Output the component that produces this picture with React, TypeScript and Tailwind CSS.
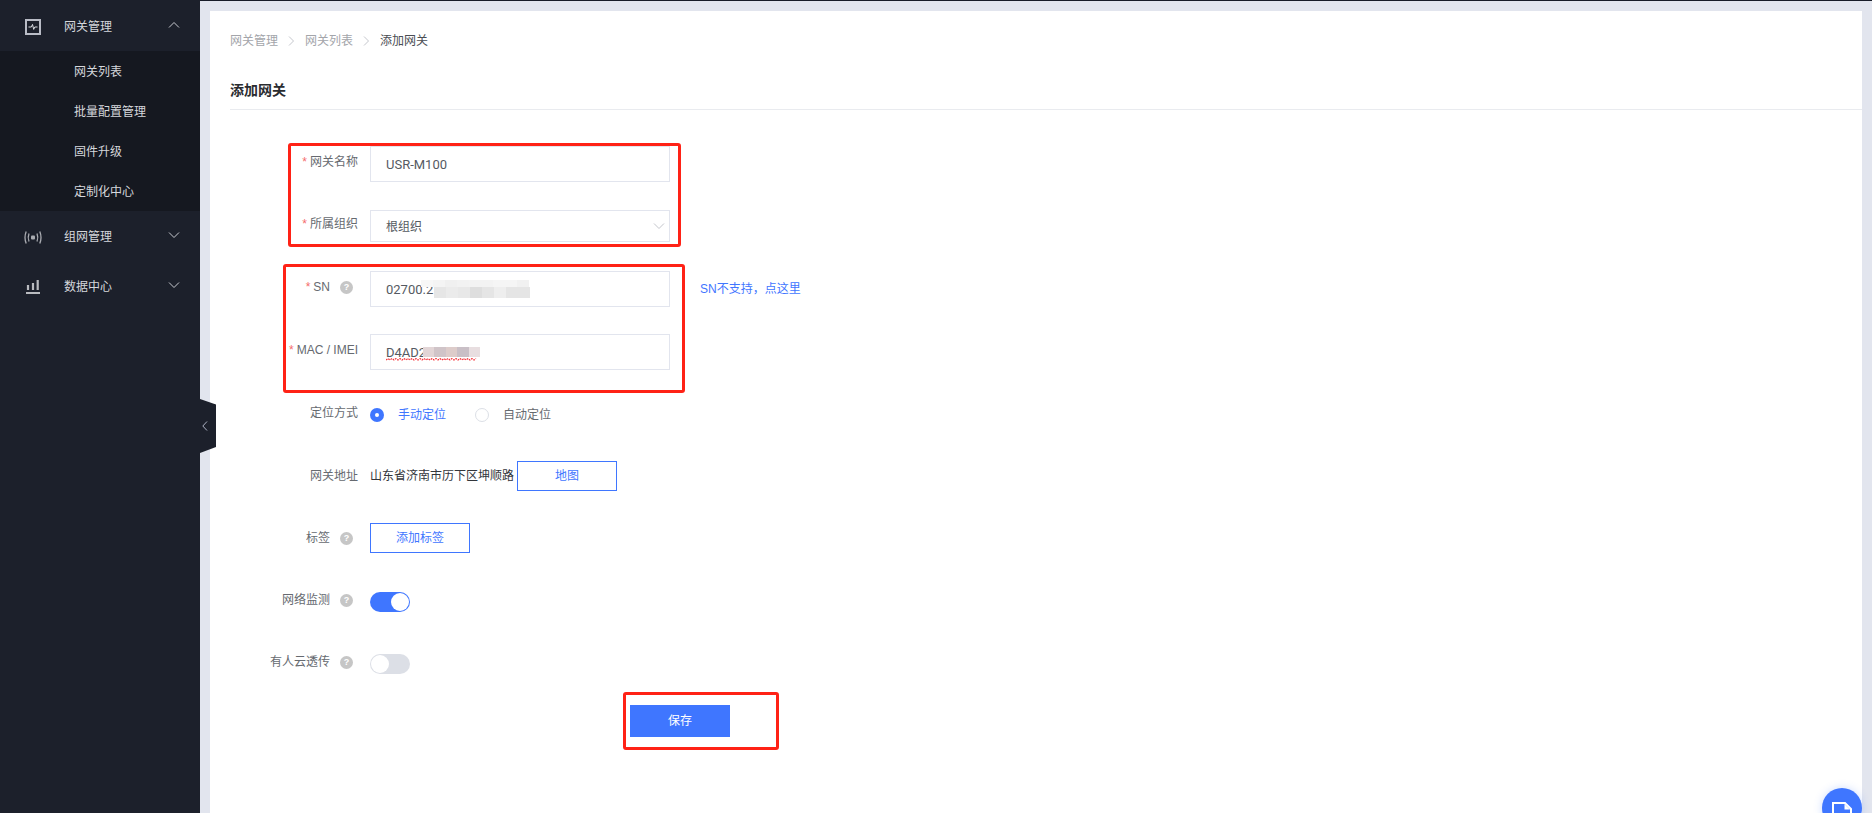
import React from "react";

const Chevron = ({ up = false, className = "" }: { up?: boolean; className?: string }) => (
  <svg width="12" height="8" viewBox="0 0 12 8" fill="none" className={className}>
    <path d={up ? "M1 6.5 L6 1.5 L11 6.5" : "M1 1.5 L6 6.5 L11 1.5"} stroke="currentColor" strokeWidth="1" />
  </svg>
);

const Crumb = () => (
  <svg width="7" height="10" viewBox="0 0 7 10" fill="none" className="text-[#c4c6cc]">
    <path d="M1 0.5 L5.5 5 L1 9.5" stroke="currentColor" strokeWidth="1" />
  </svg>
);

const Help = () => (
  <span className="flex h-[13px] w-[13px] shrink-0 items-center justify-center rounded-full bg-[#c6c6c6] text-[9px] leading-none font-bold text-white">?</span>
);

const SideRow = ({ icon, label, up = false }: { icon: React.ReactNode; label: string; up?: boolean }) => (
  <div className="flex h-[50px] items-center pt-[2px] text-[12px] text-[#d5d7dc]">
    <span className="flex w-[64px] justify-center pl-[2px]">{icon}</span>
    <span className="flex-1">{label}</span>
    <Chevron up={up} className="mr-[20px] mb-[5px] text-[#c8cad0]" />
  </div>
);

const Row = ({ label, required = false, help = false, flat = false, top, children }: { label: string; required?: boolean; help?: boolean; flat?: boolean; top: string; children: React.ReactNode }) => (
  <div className={`flex items-center ${top}`}>
    <div className={`flex w-[128px] shrink-0 items-center justify-end text-[12px] text-[#666a70] ${flat ? "" : "-translate-y-[2px]"}`}>
      {required && <span className="mr-[3px] text-[#f56c6c]">*</span>}
      <span className="whitespace-nowrap">{label}</span>
      {help && <span className="ml-[10px] mr-[5px]"><Help /></span>}
    </div>
    <div className="ml-[12px] flex items-center">{children}</div>
  </div>
);

const Annot = ({ className }: { className: string }) => (
  <div className={`pointer-events-none absolute rounded-[3px] border-[3px] border-[#ff2216] ${className}`} />
);

const Toggle = ({ on }: { on: boolean }) => (
  <span className={`flex h-[20px] w-[40px] items-center rounded-full ${on ? "justify-end bg-[#3f76ff] pr-[1px]" : "justify-start bg-[#dcdfe6] pl-[1px]"}`}>
    <span className="h-[18px] w-[18px] rounded-full bg-white" />
  </span>
);

const snTop = ["bg-[#f7f7f7]", "bg-[#f4f4f4]", "bg-[#f0f0f0]", "bg-[#f2f2f2]", "bg-[#f3f3f3]", "bg-[#f3f3f3]", "bg-[#f5f5f5]", "bg-[#f5f5f5]", "bg-[#f1f1f1]"];
const snBottom = ["bg-[#e6e6e6]", "bg-[#ebebeb]", "bg-[#e8e8e8]", "bg-[#dedede]", "bg-[#e5e5e5]", "bg-[#eeeeee]", "bg-[#e5e5e5]", "bg-[#e5e5e5]"];
const macCells = ["bg-[#e2d5d6]", "bg-[#d0c4c8]", "bg-[#ddccca]", "bg-[#c9bfc6]", "bg-[#e8dee0]"];

export default function App() {
  return (
    <div className="relative flex h-[813px] w-[1872px] overflow-hidden bg-[#e2e5ee] text-[12px] font-['Liberation_Sans','Noto_Sans_CJK_SC',sans-serif]">
      <aside className="flex w-[200px] shrink-0 flex-col bg-[#1c202b]">
        <div className="pt-[1px]">
          <SideRow
            up
            label="网关管理"
            icon={
              <svg width="16" height="16" viewBox="0 0 16 16" fill="none" className="text-[#b9bcc6]">
                <rect x="1" y="1" width="14" height="14" stroke="currentColor" strokeWidth="2" />
                <path d="M3.5 8 H6.4 L7.5 5.4 L8.7 10.4 L9.8 8 H12.5" stroke="#d9dbe0" strokeWidth="1" />
              </svg>
            }
          />
        </div>
        <div className="flex flex-col bg-[#151820] pl-[74px] text-[12px] text-[#d5d7dc]">
          {["网关列表", "批量配置管理", "固件升级", "定制化中心"].map((t) => (
            <div key={t} className="flex h-[40px] items-center pt-[2px]">{t}</div>
          ))}
        </div>
        <SideRow
          label="组网管理"
          icon={
            <svg width="18" height="13" viewBox="0 0 18 13" fill="none" className="text-[#a9abb1]">
              <rect x="7" y="4.5" width="4" height="4" rx="1" fill="currentColor" />
              <path d="M5 2.5 Q3.4 6.5 5 10.5 M13 2.5 Q14.6 6.5 13 10.5" stroke="currentColor" strokeWidth="1.3" />
              <path d="M2.2 0.5 Q-0.2 6.5 2.2 12.5 M15.8 0.5 Q18.2 6.5 15.8 12.5" stroke="currentColor" strokeWidth="1.3" />
            </svg>
          }
        />
        <SideRow
          label="数据中心"
          icon={
            <svg width="14" height="14" viewBox="0 0 14 14" fill="none" className="text-[#b9bbc0]">
              <path d="M0 13 H14" stroke="currentColor" strokeWidth="2" />
              <path d="M2 10 V5 M7 10 V3 M11.7 10 V0" stroke="currentColor" strokeWidth="2.2" />
            </svg>
          }
        />
      </aside>

      <div className="flex min-w-0 flex-1 flex-col">
        <div className="h-[1px] shrink-0 bg-[#181c28]" />
        <main className="mt-[10px] mr-[10px] ml-[10px] flex flex-1 flex-col bg-white pl-[20px]">
          <nav className="flex h-[60px] shrink-0 items-center gap-[10px] text-[12px] text-[#a3a5aa]">
            <span>网关管理</span>
            <Crumb />
            <span>网关列表</span>
            <Crumb />
            <span className="text-[#4a4d53]">添加网关</span>
          </nav>
          <h1 className="flex h-[39px] shrink-0 items-center border-b border-[#e9ebef] text-[14px] font-bold text-[#2a2c30]">添加网关</h1>

          <Row required label="网关名称" top="mt-[36px]">
            <div className="flex h-[36px] w-[300px] items-center border border-[#e2e5ee] pt-[2px] pl-[15px] font-['Roboto','Noto_Sans_CJK_SC',sans-serif] text-[13px] text-[#555a62]">USR-M100</div>
          </Row>
          <Row required label="所属组织" top="mt-[28px]">
            <div className="flex h-[32px] w-[300px] items-center justify-between border border-[#e2e5ee] pr-[4px] pl-[15px] text-[12px] text-[#555a62]">
              <span className="pt-[2px]">根组织</span>
              <Chevron className="text-[#c4c6cc]" />
            </div>
          </Row>
          <Row required help label="SN" top="mt-[29px]">
            <div className="relative flex h-[36px] w-[300px] items-center border border-[#e2e5ee] pt-[2px] pl-[15px] font-['Roboto','Noto_Sans_CJK_SC',sans-serif] text-[13px] text-[#555a62]">
              02700.2
              <span className="absolute top-[8px] left-[50px] flex flex-col">
                <span className="flex">
                  {snTop.map((c, i) => (
                    <span key={i} className={`h-[7px] w-[12px] ${c}`} />
                  ))}
                </span>
                <span className="ml-[13px] flex">
                  {snBottom.map((c, i) => (
                    <span key={i} className={`h-[11px] w-[12px] ${c}`} />
                  ))}
                </span>
              </span>
            </div>
            <a className="ml-[30px] whitespace-nowrap text-[12px] text-[#3f76ff]">SN不支持，点这里</a>
          </Row>
          <Row required label="MAC / IMEI" top="mt-[27px]">
            <div className="relative flex h-[36px] w-[300px] items-center border border-[#e2e5ee] pt-[2px] pl-[15px] font-['Roboto','Noto_Sans_CJK_SC',sans-serif] text-[13px] text-[#555a62]">
              D4AD2
              <span className="absolute top-[12px] left-[52px] flex">
                {macCells.map((c, i) => (
                  <span key={i} className={`h-[10px] w-[11.4px] ${c}`} />
                ))}
              </span>
              <svg width="92" height="3" viewBox="0 0 92 3" className="absolute top-[23px] left-[15px]">
                <path d="M0 2 L2 0.5 L4 2 L6 0.5 L8 2 L10 0.5 L12 2 L14 0.5 L16 2 L18 0.5 L20 2 L22 0.5 L24 2 L26 0.5 L28 2 L30 0.5 L32 2 L34 0.5 L36 2 L38 0.5 L40 2 L42 0.5 L44 2 L46 0.5 L48 2 L50 0.5 L52 2 L54 0.5 L56 2 L58 0.5 L60 2 L62 0.5 L64 2 L66 0.5 L68 2 L70 0.5 L72 2 L74 0.5 L76 2 L78 0.5 L80 2 L82 0.5 L84 2 L86 0.5 L88 2 L90 0.5" stroke="#f4333a" strokeWidth="1.2" fill="none" strokeDasharray="1.8 1" />
              </svg>
            </div>
          </Row>
          <Row label="定位方式" top="mt-[36px]">
            <span className="flex h-[14px] w-[14px] items-center justify-center rounded-full bg-[#3f76ff]">
              <span className="h-[4px] w-[4px] rounded-full bg-white" />
            </span>
            <span className="ml-[14px] text-[#3f76ff]">手动定位</span>
            <span className="ml-[29px] h-[14px] w-[14px] rounded-full border border-[#dcdfe6]" />
            <span className="ml-[14px] text-[#666a70]">自动定位</span>
          </Row>
          <Row flat label="网关地址" top="mt-[37px]">
            <span className="whitespace-nowrap text-[#33363b]">山东省济南市历下区坤顺路</span>
            <button className="ml-[3px] h-[30px] w-[100px] border border-[#3f76ff] text-[12px] text-[#3f76ff]">地图</button>
          </Row>
          <Row flat help label="标签" top="mt-[32px]">
            <button className="h-[30px] w-[100px] border border-[#3f76ff] text-[12px] text-[#3f76ff]">添加标签</button>
          </Row>
          <Row help label="网络监测" top="mt-[39px]">
            <Toggle on />
          </Row>
          <Row help label="有人云透传" top="mt-[42px]">
            <Toggle on={false} />
          </Row>
          <div className="mt-[31px] ml-[400px]">
            <button className="h-[32px] w-[100px] bg-[#3f76ff] text-[12px] text-white">保存</button>
          </div>
        </main>
      </div>

      <div className="absolute top-[399px] left-[200px] flex h-[54px] w-[16px] items-center justify-center bg-[#1c202b] [clip-path:polygon(0_0,100%_10%,100%_89%,0_100%)]">
        <svg width="6" height="10" viewBox="0 0 6 10" fill="none" className="mr-[6px] text-[#aeb4c4]">
          <path d="M5 0.5 L0.8 5 L5 9.5" stroke="currentColor" strokeWidth="1" />
        </svg>
      </div>

      <Annot className="top-[143px] left-[288px] h-[104px] w-[393px]" />
      <Annot className="top-[264px] left-[283px] h-[129px] w-[402px]" />
      <Annot className="top-[692px] left-[623px] h-[58px] w-[156px]" />

      <div className="absolute top-[788px] left-[1822px] flex h-[40px] w-[40px] items-start justify-center rounded-full bg-[#3f76ff] pt-[14px] shadow-[0_0_8px_rgba(63,118,255,0.25)]">
        <svg width="20" height="20" viewBox="0 0 20 20" fill="none">
          <path d="M1 19 V1 H13 L19 7 V19" stroke="white" strokeWidth="2" />
          <path d="M12.5 2 V7.5 H18" fill="white" />
        </svg>
      </div>
    </div>
  );
}
